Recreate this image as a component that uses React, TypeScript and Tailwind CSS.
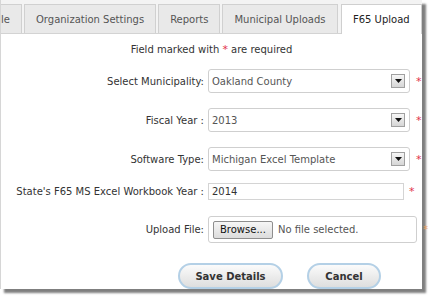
import { useState } from "react";

const tabs = [
  { id: "org", label: "Organization Settings" },
  { id: "reports", label: "Reports" },
  { id: "uploads", label: "Municipal Uploads" },
  { id: "f65", label: "F65 Upload" },
];

function Star() {
  return <span className="text-[#e2334a] text-[11px] leading-none">*</span>;
}

function ArrowBox() {
  return (
    <span className="flex h-[14px] w-[14px] items-center justify-center border border-[#a0a0a0] bg-gradient-to-b from-[#f6f6f6] to-[#d6d6d6]">
      <svg width="7" height="4" viewBox="0 0 7 4">
        <path d="M0 0h7L3.5 4z" fill="#111" />
      </svg>
    </span>
  );
}

function SelectBox({ value }: { value: string }) {
  return (
    <div className="flex h-[24px] w-[202px] items-center justify-between rounded-[3px] border border-[#cfcfcf] bg-white pl-[3px] pr-[4px] text-[#555]">
      <span>{value}</span>
      <ArrowBox />
    </div>
  );
}

function Row({ label, children, className }: { label: string; children: React.ReactNode; className: string }) {
  return (
    <div className={"flex items-center " + className}>
      <div className="w-[207px] shrink-0 whitespace-nowrap pr-[4px] text-right text-[#333]">{label}</div>
      {children}
    </div>
  );
}

export default function App() {
  const [active] = useState("f65");

  return (
    <div className="h-[296px] w-[432px] overflow-hidden bg-white font-['DejaVu_Sans',sans-serif] text-[10px]">
      <div className="flex h-[289px] w-[422px] flex-col border-l border-[#d6d6d6] bg-white shadow-[4px_4px_2px_rgba(0,0,0,0.5)]">
        <div className="flex h-[34px] items-end gap-[2px] border-b border-[#d3d3d3] bg-[#f3f3f3] pt-[4px]">
          <div className="flex h-[29px] w-[21px] shrink-0 justify-end overflow-hidden">
            <div className="flex h-[29px] shrink-0 items-center whitespace-nowrap border border-b-0 border-[#d0d0d0] bg-[#e9e9e9] px-[11px] text-[10px] text-[#555]">
              Municipal Profile
            </div>
          </div>
          {tabs.map((t) => (
            <div
              key={t.id}
              className={
                "flex items-center whitespace-nowrap border border-b-0 px-[11px] text-[10px] " +
                (t.id === active
                  ? "-mb-px ml-[1px] h-[30px] flex-1 justify-center border-[#cfcfcf] bg-white text-[#222]"
                  : "h-[29px] border-[#d0d0d0] bg-[#e9e9e9] text-[#555]")
              }
            >
              {t.label}
            </div>
          ))}
        </div>

        <div className="flex flex-col">
          <div className="mt-[8px] text-center text-[#333]">
            Field marked with <Star /> are required
          </div>

          <Row label="Select Municipality:" className="mt-[12px]">
            <SelectBox value="Oakland County" />
            <span className="ml-[6px]"><Star /></span>
          </Row>

          <Row label="Fiscal Year :" className="mt-[15px]">
            <SelectBox value="2013" />
            <span className="ml-[6px]"><Star /></span>
          </Row>

          <Row label="Software Type:" className="mt-[15px]">
            <SelectBox value="Michigan Excel Template" />
            <span className="ml-[6px]"><Star /></span>
          </Row>

          <Row label="State's F65 MS Excel Workbook Year :" className="mt-[12px]">
            <div className="flex h-[17px] w-[196px] items-center border border-[#d4d4d4] bg-white pl-[3px] text-[#333]">
              2014
            </div>
            <span className="ml-[5px]"><Star /></span>
          </Row>

          <Row label="Upload File:" className="mt-[16px]">
            <div className="flex h-[27px] w-[209px] shrink-0 items-center rounded-[3px] border border-[#cfcfcf] bg-white pl-[4px] text-[#555]">
              <span className="flex h-[18px] items-center rounded-[2px] border border-[#8e8e8e] bg-gradient-to-b from-[#f6f6f6] to-[#dcdcdc] px-[6px] text-[#111]">
                Browse...
              </span>
              <span className="ml-[5px]">No file selected.</span>
            </div>
            <span className="ml-[6px] text-[#e8a060]">*</span>
          </Row>

          <div className="ml-[177px] mt-[20px] flex gap-[24px]">
            <button className="h-[26px] w-[105px] rounded-full border-2 border-[#b4d0e6] bg-gradient-to-b from-[#fbfbfb] to-[#dedede] text-[10px] font-bold text-[#333]">
              Save Details
            </button>
            <button className="h-[26px] w-[74px] rounded-full border-2 border-[#b4d0e6] bg-gradient-to-b from-[#fbfbfb] to-[#dedede] text-[10px] font-bold text-[#333]">
              Cancel
            </button>
          </div>
        </div>
      </div>
    </div>
  );
}
